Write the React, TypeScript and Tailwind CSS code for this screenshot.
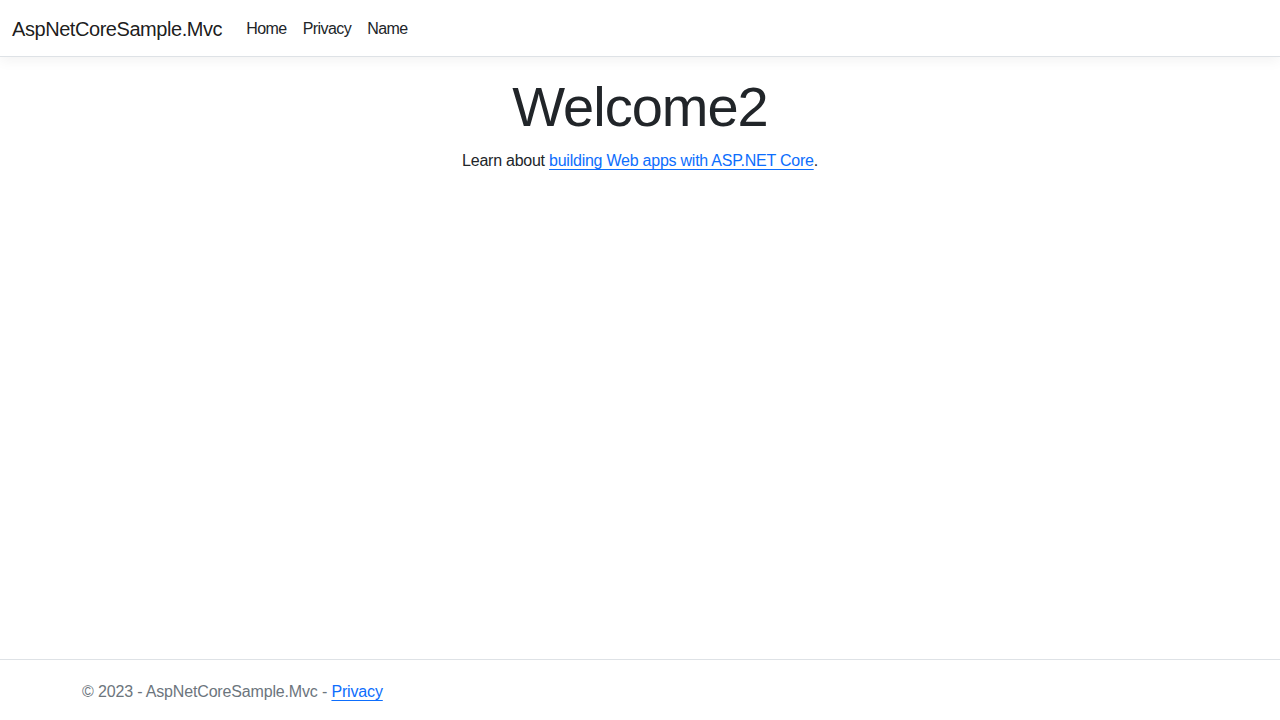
export default function App() {
  return (
    <div className="flex min-h-screen flex-col bg-white font-['Liberation_Sans',Arial,sans-serif] text-base text-[#212529]">
      <header>
        <nav className="mb-4 flex h-[57px] items-center border-b border-[#dee2e6] bg-white px-3 pt-px shadow-[0_0.25rem_0.75rem_rgba(0,0,0,0.05)]">
          <a href="#" className="mr-4 text-xl leading-[30px] tracking-[-0.022em] text-black/90 no-underline">AspNetCoreSample.Mvc</a>
          <ul className="flex">
            <li><a href="#" className="block px-2 py-2 leading-6 tracking-[-0.035em] text-[#212529]">Home</a></li>
            <li><a href="#" className="block px-2 py-2 leading-6 tracking-[-0.035em] text-[#212529]">Privacy</a></li>
            <li><a href="#" className="block px-2 py-2 leading-6 tracking-[-0.035em] text-[#212529]">Name</a></li>
          </ul>
        </nav>
      </header>

      <main className="mx-auto w-full max-w-[1140px] px-3 pb-4 text-center">
        <h1 className="mb-2 text-[56px] font-light leading-[1.2] tracking-[-0.018em] text-[#212529]">Welcome2</h1>
        <p className="pt-px leading-6 tracking-[-0.015em]">
          Learn about <a href="#" className="text-[#0d6efd] underline underline-offset-[3px]">building Web apps with ASP.NET Core</a>.
        </p>
      </main>

      <footer className="mt-auto border-t border-[#dee2e6] pt-[3px] leading-[57px] text-[#6c757d]">
        <div className="mx-auto w-full max-w-[1140px] px-3 tracking-[-0.01em]">
          &copy; 2023 - AspNetCoreSample.Mvc - <a href="#" className="text-[#0d6efd] underline underline-offset-[3px]">Privacy</a>
        </div>
      </footer>
    </div>
  );
}
